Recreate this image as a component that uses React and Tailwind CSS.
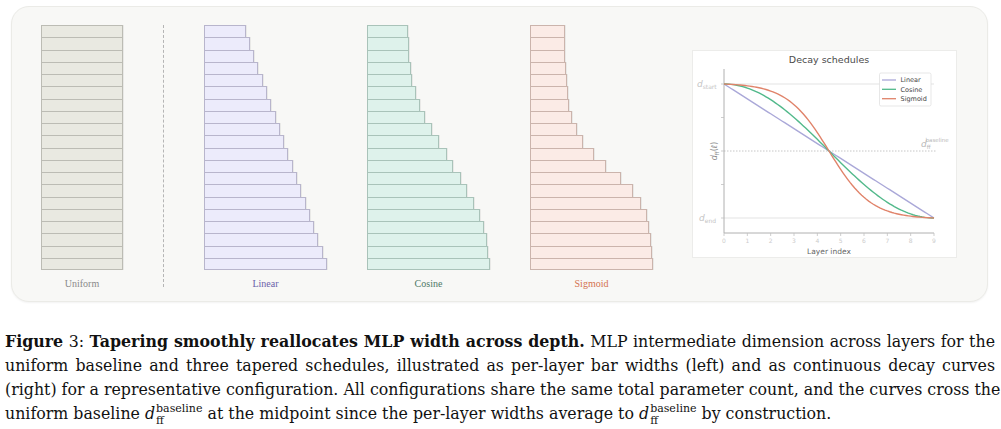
import React from "react";

const uniform = Array(20).fill(82);
const linear = Array.from({ length: 20 }, (_, i) => 41.5 + (81.5 * i) / 19);
const cosine = [41.3, 41.7, 42.3, 43.7, 45.3, 49.3, 53.3, 58.3, 64.7, 71.7, 79.7, 86.3, 93.7, 100.3, 107.3, 113, 117, 120, 121.3, 122.7];
const sigmoid = [34.7, 35, 35.3, 36, 37, 37.7, 39.3, 42.3, 46.7, 53.3, 63.7, 76.4, 90.7, 103, 111.4, 116.7, 119.4, 121, 122, 122.7];

function Bars({ widths, fill, border }) {
  return (
    <div className="flex flex-col">
      {widths.map((w, i) => (
        <div
          key={i}
          className={`h-[12.25px] box-border border-x border-t ${i === widths.length - 1 ? "border-b" : ""}`}
          style={{ width: w, backgroundColor: fill, borderColor: border, boxShadow: "1px 0 0 rgba(0,0,0,0.06)" }}
        />
      ))}
    </div>
  );
}

function Column({ widths, fill, border, label, labelClass, colWidth }) {
  return (
    <div className="flex flex-col" style={{ width: colWidth }}>
      <Bars widths={widths} fill={fill} border={border} />
      <div className={`mt-[7px] text-center text-[10px] leading-[14px] ${labelClass}`} style={{ fontFamily: '"Liberation Serif", serif' }}>
        {label}
      </div>
    </div>
  );
}

function Chart() {
  const x0 = 31, x1 = 241, yS = 33, yE = 167;
  const X = (v) => x0 + ((x1 - x0) * v) / 9;
  const Y = (f) => yS + (yE - yS) * f;
  const mk = (fn) => {
    const pts = [];
    for (let k = 0; k <= 90; k++) {
      const t = k / 90;
      pts.push(`${k === 0 ? "M" : "L"}${(x0 + (x1 - x0) * t).toFixed(2)},${Y(fn(t)).toFixed(2)}`);
    }
    return pts.join(" ");
  };
  const sg = (t) => 1 / (1 + Math.exp(-10 * (t - 0.5)));
  const s0 = sg(0), s1 = sg(1);
  const font = '"DejaVu Sans", sans-serif';
  return (
    <div className="w-[265px] h-[208px] bg-white border border-[#ececea] shrink-0">
      <svg width="265" height="208" viewBox="0 0 265 208" style={{ fontFamily: font, display: "block" }}>
        <text x="136" y="12" textAnchor="middle" fontSize="9.5" fill="#4a4a4a">Decay schedules</text>
        <line x1={x0} y1={yS} x2={x1} y2={yS} stroke="#dcdcdc" strokeWidth="0.8" />
        <line x1={x0} y1={yE} x2={x1} y2={yE} stroke="#dcdcdc" strokeWidth="0.8" />
        <line x1={x0} y1="100" x2={x1 + 2} y2="100" stroke="#b8b8b8" strokeWidth="0.8" strokeDasharray="1.5 1.5" />
        <line x1={x0} y1="18" x2={x0} y2="182" stroke="#b0b0b0" strokeWidth="1" />
        <line x1={x0} y1="182" x2={x1} y2="182" stroke="#b0b0b0" strokeWidth="1" />
        {[33, 66.5, 100, 133.5, 167].map((y) => (
          <line key={y} x1={x0 - 3} y1={y} x2={x0} y2={y} stroke="#c0c0c0" strokeWidth="0.8" />
        ))}
        {Array.from({ length: 10 }, (_, i) => (
          <g key={i}>
            <line x1={X(i)} y1="182" x2={X(i)} y2="185" stroke="#c0c0c0" strokeWidth="0.8" />
            <text x={X(i)} y="192" textAnchor="middle" fontSize="6" fill="#cccccc">{i}</text>
          </g>
        ))}
        <text x="136" y="203" textAnchor="middle" fontSize="7.5" fill="#666">Layer index</text>
        <text x="4" y="36" fontSize="9" fill="#c4c4c4" fontStyle="italic">d<tspan fontSize="6" fontStyle="normal" dy="2">start</tspan></text>
        <text x="6" y="170" fontSize="9" fill="#c4c4c4" fontStyle="italic">d<tspan fontSize="6" fontStyle="normal" dy="2">end</tspan></text>
        <text x="228" y="96" fontSize="9" fill="#b8b8b8" fontStyle="italic">d<tspan fontSize="5.5" fontStyle="normal" dy="2">ff</tspan><tspan fontSize="5.5" fontStyle="normal" dx="-5" dy="-7">baseline</tspan></text>
        <text transform="translate(24 100) rotate(-90)" textAnchor="middle" fontSize="8" fill="#888" fontStyle="italic">d<tspan fontSize="5.5" fontStyle="normal" dy="1.5">ff</tspan><tspan fontStyle="normal" dy="-1.5">(ℓ)</tspan></text>
        <path d={mk((t) => t)} fill="none" stroke="#aaa8d8" strokeWidth="1.4" />
        <path d={mk((t) => (1 - Math.cos(Math.PI * t)) / 2)} fill="none" stroke="#52b98b" strokeWidth="1.4" />
        <path d={mk((t) => (sg(t) - s0) / (s1 - s0))} fill="none" stroke="#e0836a" strokeWidth="1.4" />
        <rect x="186.5" y="22" width="51.5" height="33" rx="1.5" fill="#fff" stroke="#dddddd" strokeWidth="0.7" />
        {[["Linear", "#aaa8d8", 29], ["Cosine", "#52b98b", 38.3], ["Sigmoid", "#e0836a", 47.7]].map(([n, c, y]) => (
          <g key={n}>
            <line x1="189" y1={y} x2="203" y2={y} stroke={c} strokeWidth="1.3" />
            <text x="207.5" y={y + 2.3} fontSize="6.5" fill="#444">{n}</text>
          </g>
        ))}
      </svg>
    </div>
  );
}

function DBase() {
  return (
    <span className="inline-flex items-baseline">
      <span className="italic">d</span>
      <span className="inline-flex flex-col leading-[12px] text-[11px] relative top-[-7px] ml-[1px]">
        <span>baseline</span>
        <span>ff</span>
      </span>
    </span>
  );
}

export default function App() {
  const serif = { fontFamily: '"DejaVu Serif", serif' };
  const line = "block [text-align-last:justify] text-justify whitespace-nowrap";
  return (
    <div className="w-[1001px] h-[429px] bg-white overflow-hidden">
      <div className="pt-[6px] pl-[11px]">
        <div className="w-[977px] h-[296px] rounded-[18px] bg-[#f8f8f6] border border-[#ebebe7] shadow-[0_1px_2px_rgba(0,0,0,0.05)] flex items-center pl-[29px]">
          <div className="flex items-start gap-10 self-start pt-[18px]">
            <Column widths={uniform} fill="#e9e9e1" border="#bcbcb4" label="Uniform" labelClass="text-[#8a8a8a]" colWidth={82} />
            <div className="w-0 h-[262px] border-l border-dashed border-[#b5b5b5]" />
            <Column widths={linear} fill="#ecebfb" border="#b8b5cc" label="Linear" labelClass="text-[#6a62aa]" colWidth={123} />
            <Column widths={cosine} fill="#def2eb" border="#a9c3b9" label="Cosine" labelClass="text-[#4e7868]" colWidth={123} />
            <Column widths={sigmoid} fill="#fbebe6" border="#cbb4ac" label="Sigmoid" labelClass="text-[#d4724f]" colWidth={123} />
          </div>
          <div className="ml-[39px]">
            <Chart />
          </div>
        </div>
      </div>
      <div className="mt-[28px] pl-[5px] pr-[6px] text-[15.8px] leading-[24px] text-[#111]" style={serif}>
        <span className={line}><b>Figure</b> 3: <b>Tapering smoothly reallocates MLP width across depth.</b> MLP intermediate dimension across layers for the</span>
        <span className={line}>uniform baseline and three tapered schedules, illustrated as per-layer bar widths (left) and as continuous decay curves</span>
        <span className={line}>(right) for a representative configuration. All configurations share the same total parameter count, and the curves cross the</span>
        <span className="block whitespace-nowrap">uniform baseline <DBase /> at the midpoint since the per-layer widths average to <DBase /> by construction.</span>
      </div>
    </div>
  );
}
